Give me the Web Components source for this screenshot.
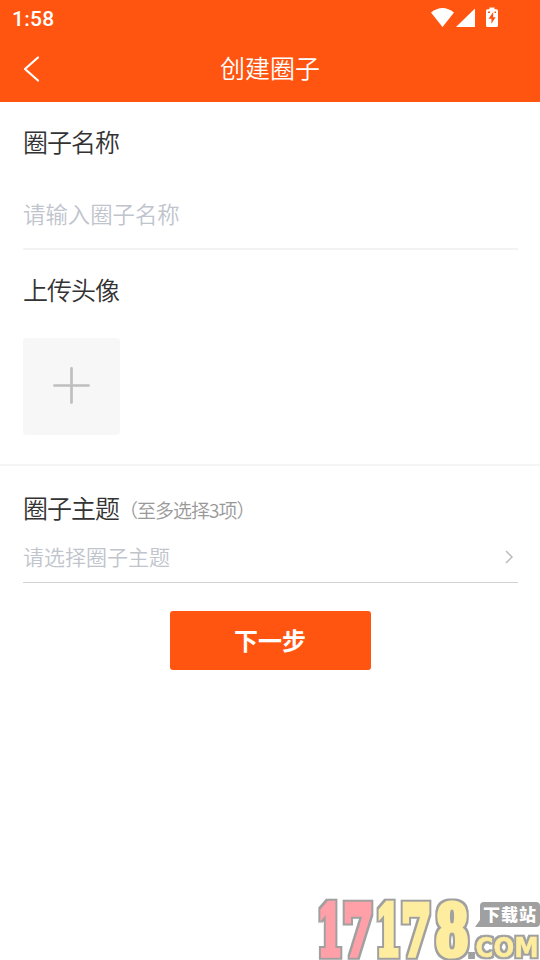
<!DOCTYPE html>
<html lang="zh-CN"><head><meta charset="utf-8"><title>创建圈子</title>
<style>html,body{margin:0;background:#fff}body{font-family:"Noto Sans CJK SC DemiLight","Noto Sans CJK SC",sans-serif;font-weight:350;width:540px;height:960px;overflow:hidden}</style></head>
<body><circle-page></circle-page>
<script>
const define=(name,html)=>customElements.define(name,class extends HTMLElement{
 constructor(){super();this.attachShadow({mode:'open'}).innerHTML='<style>*{box-sizing:border-box}svg{display:block}</style>'+html;}
});
define('status-bar',`<style>:host{display:flex;height:36px;padding:0 42px 0 12px;align-items:center;justify-content:space-between;color:#fff;font:500 21px/36px Roboto,sans-serif}span{padding-top:2px;letter-spacing:.3px}</style>
<span>1:58</span><svg width="68" height="36" viewBox="430 0 68 36" fill="#fff"><path d="M431 12.5Q442.5 3.5 454 12.5L442.5 27Z"/><path d="M475 8.5V27H456Z"/><path fill-rule="evenodd" d="M489.500 7.500H494.500V9.300H496.500Q498 9.300 498 10.800V25.500Q498 27 496.500 27H487.500Q486 27 486 25.500V10.800Q486 9.300 487.500 9.300H489.500ZM493.200 12L488.500 18.800H491.400V23.800L495.600 17.300H493.200ZM488 11.500V13H490V11.500ZM494.500 11.500V13H496V11.500Z"/></svg>`);
define('nav-bar',`<style>:host{display:grid;grid-template-columns:60px 1fr 60px;height:66px;color:#fff}svg{margin:19px 0 0 22px}h1{margin:0;text-align:center;font-size:25px;font-weight:350;line-height:62px}</style>
<svg width="20" height="28" viewBox="0 0 20 28" fill="none" stroke="#fff" stroke-width="2.200" stroke-linecap="round" stroke-linejoin="round"><path d="M16 2.500L3 14L16 25.500"/></svg><h1><slot></slot></h1>`);
define('field-label',`<style>:host{display:flex;align-items:baseline;height:36px;line-height:36px;font-size:25px;letter-spacing:-1px;color:#333}::slotted(small){font-size:19px;letter-spacing:-1px;color:#999}</style><slot></slot><slot name="note"></slot>`);
define('text-field',`<style>:host{display:flex;align-items:center;font-size:22.4px;color:#c0c4cc}</style><slot></slot>`);
define('select-field',`<style>:host{display:flex;align-items:center;justify-content:space-between;font-size:21px;color:#c0c4cc}svg{margin:1px 4px 0 0}</style><slot></slot><svg width="10" height="14" fill="none" stroke="#bbb" stroke-width="1.500"><path d="M2 1L8 7L2 13"/></svg>`);
define('avatar-picker',`<style>:host{display:grid;justify-items:center;padding-top:29px;width:97px;height:97px;border-radius:4px;background:#f7f7f7}</style><svg width="37" height="37" stroke="#bfbfbf" stroke-width="2.700" stroke-linecap="round"><path d="M18.500 1.400V35.600M1.400 18.500H35.600"/></svg>`);
define('primary-button',`<style>:host{display:block}button{display:block;width:201px;height:59px;border:0;padding:0 0 1px;border-radius:3px;background:#ff5511;color:#fff;font:700 24px/58px "Noto Sans CJK SC",sans-serif}</style><button><slot></slot></button>`);
define('site-mark',`<style>:host{display:block;position:absolute;left:310px;top:890px;width:230px;height:70px}filter{color-interpolation-filters:sRGB}.n text{stroke-width:4.5px;stroke-linejoin:miter;vector-effect:non-scaling-stroke}.p{fill:#ffa0a8;stroke:#ffa0a8}.y{fill:#ffed9f;stroke:#ffed9f}.n{filter:url(#edge)}.c{filter:url(#thin)}</style>
<svg width="230" height="70" viewBox="310 890 230 70"><defs>
<filter id="edge" filterUnits="userSpaceOnUse" x="310" y="890" width="230" height="70"><feMorphology in="SourceAlpha" operator="dilate" radius="2" result="d"/><feFlood flood-color="#a0a0a0"/><feComposite in2="d" operator="in" result="g"/><feMerge><feMergeNode in="g"/><feMergeNode in="SourceGraphic"/></feMerge></filter>
<filter id="thin" filterUnits="userSpaceOnUse" x="460" y="925" width="80" height="35"><feMorphology in="SourceAlpha" operator="dilate" radius="2" result="d"/><feFlood flood-color="#a0a0a0"/><feComposite in2="d" operator="in" result="g"/><feMerge><feMergeNode in="g"/><feMergeNode in="SourceGraphic"/></feMerge></filter></defs>
<g class="n" font-family="DejaVu Serif" font-weight="700" font-size="70">
<text class="p" transform="translate(317.400 955) scale(.51 .98)">1</text>
<text class="p" transform="translate(342.900 955) scale(.62 .98)">7</text>
<text class="y" transform="translate(375.800 955) scale(.51 .98)">1</text>
<text class="y" transform="translate(401 955) scale(.62 .98)">7</text>
<text class="y" transform="translate(435.500 955) scale(.68 .98)">8</text></g>
<path d="M484 902H536Q540 902 540 906V923Q540 927 536 927H475L480 920V906Q480 902 484 902Z" fill="#a0a0a0"/>
<text x="483" y="920.500" font-family="Noto Sans CJK SC" font-weight="900" font-size="17" textLength="53" fill="#fff">下载站</text>
<g class="c" font-family="DejaVu Sans" font-weight="700" font-size="26"><text x="468.500" y="957" style="fill:#a0a0a0" font-size="16">.</text><text x="475.500" y="957" class="y" textLength="63" lengthAdjust="spacingAndGlyphs" style="stroke-width:.5px">COM</text></g></svg>`);
define('circle-page',`<style>:host{display:block;width:540px;height:960px;position:relative;background:#fff;overflow:hidden}
header{height:102px;background:#ff5511}section{padding:0 22px 0 23px}
.name{height:148px;padding-top:21px}.name text-field{height:91px;padding-top:18px;border-bottom:2px solid #f3f3f3}.avatar{height:216px;border-bottom:2px solid #f5f5f5;padding-top:21px}.avatar avatar-picker{margin-top:31px}
.topic{height:117px;padding-top:23px}.topic select-field{height:58px;border-bottom:1px solid #d2d2d2;padding-top:5px}footer{display:flex;justify-content:center;padding-top:28px}</style>
<header><status-bar></status-bar><nav-bar>创建圈子</nav-bar></header>
<main><section class="name"><field-label>圈子名称</field-label><text-field>请输入圈子名称</text-field></section>
<section class="avatar"><field-label>上传头像</field-label><avatar-picker></avatar-picker></section>
<section class="topic"><field-label>圈子主题<small slot="note">（至多选择3项）</small></field-label><select-field>请选择圈子主题</select-field></section></main>
<footer><primary-button>下一步</primary-button></footer><site-mark></site-mark>`);
</script></body></html>
